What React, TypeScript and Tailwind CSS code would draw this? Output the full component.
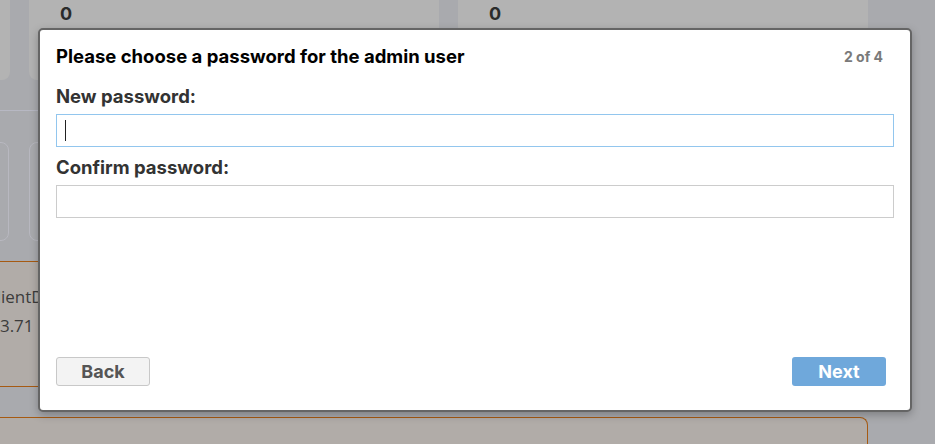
import { useState } from "react";

const FONT = { fontFamily: '"Inter", "Liberation Sans", sans-serif' };
const BG_FONT = { fontFamily: '"Open Sans", "Liberation Sans", sans-serif' };

function Background() {
    return (
        <div className="flex w-[868px] flex-col text-[#2b2b2b]" style={FONT}>
            <div className="flex gap-[19px] -mt-[20px]">
                <div className="h-[100px] w-[40px] -ml-[30px] rounded-b-lg bg-[#b3b3b3]" />
                <div className="h-[100px] w-[410px] rounded-b-lg bg-[#b3b3b3] px-[31px] pt-[20px] text-[18px] font-bold">0</div>
                <div className="h-[100px] w-[410px] rounded-b-lg bg-[#b3b3b3] px-[31px] pt-[20px] text-[18px] font-bold">0</div>
            </div>
            <div className="mt-[30px] h-px bg-[#b7b8c3]" />
            <div className="mt-[31px] flex gap-[20px]">
                <div className="h-[99px] w-[40px] -ml-[31px] rounded-lg border border-[#b8b8c0]" />
                <div className="h-[99px] w-[200px] rounded-lg border border-[#b8b8c0]" />
            </div>
            <div
                className="mt-[20px] h-[126px] border-y border-[#a65a12] bg-[#b1aca8] pt-[20px] text-[17px] leading-[29px] text-[#3c3c3c]"
                style={BG_FONT}>
                <div className="-ml-[14px]">ClientDetails</div>
                <div className="-ml-[24px]">10.3.71</div>
            </div>
            <div className="mt-[30px] h-[40px] rounded-tr-lg border-t border-r border-[#a65a12] bg-[#b1aca8]" />
        </div>
    );
}

export default function App() {
    const [pw, setPw] = useState("");
    const [confirm, setConfirm] = useState("");

    return (
        <div className="relative h-[444px] w-[935px] overflow-hidden bg-[#a9aaae]">
            <Background />

            <div
                className="absolute left-[38px] top-[28px] flex h-[384px] w-[874px] flex-col rounded-[5px] border-2 border-[#656565] bg-white px-[16px] pt-[14px] pb-[24px] shadow-[0_3px_9px_rgba(0,0,0,0.25)]"
                role="dialog"
                style={FONT}>
                <div className="flex items-center justify-between">
                    <h2 className="text-[18.5px] font-bold leading-[24px] text-black">
                        Please choose a password for the admin user
                    </h2>
                    <span className="mr-[11px] text-[14px] font-bold text-[#7a7a7a]">2 of 4</span>
                </div>

                <label className="mt-[16px] text-[18.5px] font-bold leading-[24px] text-[#333]">
                    New password:
                </label>
                <div className="relative mt-[6px]">
                    <input
                        type="password"
                        value={pw}
                        onChange={(e) => setPw(e.target.value)}
                        className="h-[33px] w-full border border-[#92c6ee] px-[8px] text-[16px] outline-none"/>
                    {pw === "" && (
                        <span className="pointer-events-none absolute left-[9px] top-[6px] h-[21px] w-px bg-[#222]" />
                    )}
                </div>

                <label className="mt-[8px] text-[18.5px] font-bold leading-[24px] text-[#333]">
                    Confirm password:
                </label>
                <input
                    type="password"
                    value={confirm}
                    onChange={(e) => setConfirm(e.target.value)}
                    className="mt-[6px] h-[33px] w-full border border-[#cccccc] px-[8px] text-[16px] outline-none"/>

                <div className="mt-auto flex justify-between pr-[8px]">
                    <button
                        type="button"
                        className="h-[29px] w-[94px] rounded-[3px] border border-[#c8c8c8] bg-[#f3f3f3] text-[18px] font-bold text-[#555]">
                        Back
                    </button>
                    <button
                        type="button"
                        className="h-[29px] w-[94px] rounded-[3px] bg-[#6fa8db] text-[18px] font-bold text-white">
                        Next
                    </button>
                </div>
            </div>
        </div>
    );
}
